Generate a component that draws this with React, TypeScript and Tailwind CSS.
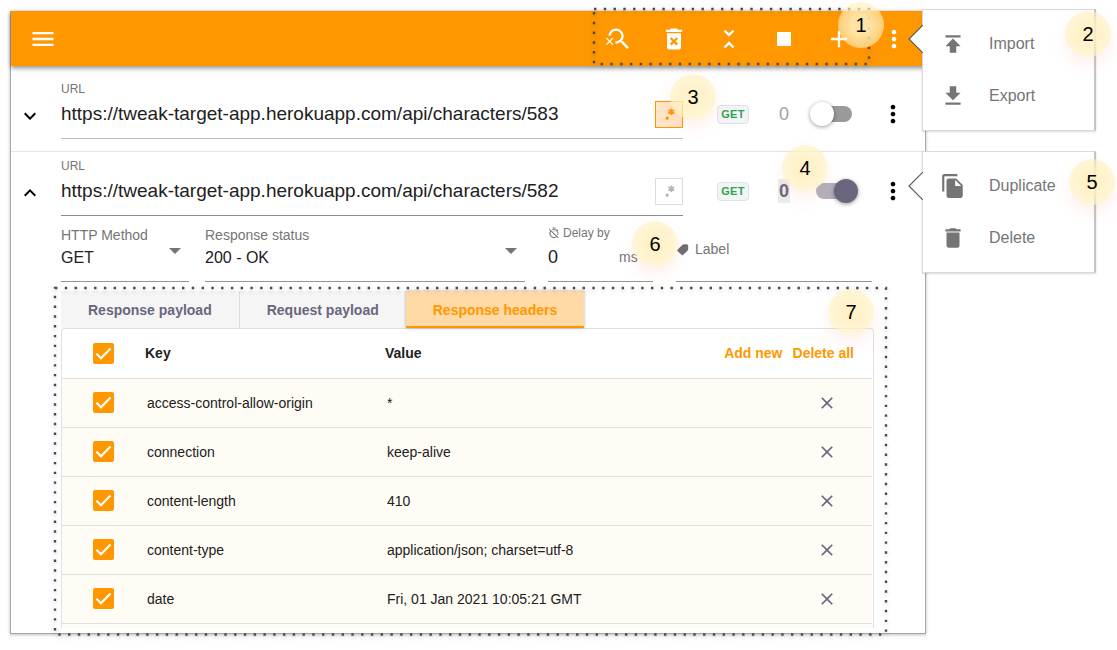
import { useState } from 'react';
import type { ReactNode } from 'react';
import {
  MdAdd,
  MdClose,
  MdExpandLess,
  MdExpandMore,
  MdMenu,
  MdMoreVert,
  MdOutlineTimerOff,
  MdSearchOff,
  MdStop,
  MdUnfoldLess,
} from 'react-icons/md';

type IconProps = { className?: string };

function solidIcon(d: string) {
  return function SolidIcon({ className }: IconProps) {
    return (
      <svg viewBox="0 0 24 24" fill="currentColor" className={className} aria-hidden="true">
        <path fillRule="evenodd" d={d} />
      </svg>
    );
  };
}

const ImportIcon = solidIcon('M5 4v2h14V4H5zm0 10h4v6h6v-6h4l-7-7-7 7z');
const ExportIcon = solidIcon('M19 9h-4V3H9v6H5l7 7 7-7zM5 18v2h14v-2H5z');
const DuplicateIcon = solidIcon(
  'M16 1H4c-1.1 0-2 .9-2 2v14h2V3h12V1zm-1 4l6 6v10c0 1.1-.9 2-2 2H7.99C6.89 23 6 22.1 6 21l.01-14c0-1.1.89-2 1.99-2h7zm-1 7h5.5L14 6.5V12z',
);
const DeleteIcon = solidIcon('M6 19c0 1.1.9 2 2 2h8c1.1 0 2-.9 2-2V7H6v12zM19 4h-3.5l-1-1h-5l-1 1H5v2h14V4z');
const DeleteAllIcon = solidIcon(
  'M6 19c0 1.1.9 2 2 2h8c1.1 0 2-.9 2-2V7H6v12zm2.46-7.12l1.41-1.41L12 12.59l2.12-2.12 1.41 1.41L13.41 14l2.12 2.12-1.41 1.41L12 15.41l-2.12 2.12-1.41-1.41L10.59 14l-2.13-2.12zM15.5 4l-1-1h-5l-1 1H5v2h14V4z',
);

const headers = [
  { key: 'access-control-allow-origin', value: '*' },
  { key: 'connection', value: 'keep-alive' },
  { key: 'content-length', value: '410' },
  { key: 'content-type', value: 'application/json; charset=utf-8' },
  { key: 'date', value: 'Fri, 01 Jan 2021 10:05:21 GMT' },
];

const tools = [
  { label: 'Clear search', icon: MdSearchOff },
  { label: 'Delete all rules', icon: DeleteAllIcon },
  { label: 'Collapse all', icon: MdUnfoldLess },
  { label: 'Stop', icon: MdStop },
  { label: 'Add rule', icon: MdAdd },
];

const badges = [
  { n: 1, place: 'top-[2px] right-[233px]' },
  { n: 2, place: 'top-[11px] right-[6px]' },
  { n: 3, place: 'top-[74px] right-[401px]' },
  { n: 4, place: 'top-[145px] right-[289px]' },
  { n: 5, place: 'top-[159px] right-[2px]' },
  { n: 6, place: 'top-[221px] right-[439px]' },
  { n: 7, place: 'top-[289px] right-[243px]' },
];

function DottedOutline({ className }: { className: string }) {
  return (
    <svg
      className={`pointer-events-none absolute overflow-visible drop-shadow-[0_2px_2px_rgba(0,0,0,0.25)] ${className}`}
      aria-hidden="true"
    >
      <rect width="100%" height="100%" fill="none" stroke="#4a4a4a" strokeWidth="2.4" strokeDasharray="2.4 7.37" />
    </svg>
  );
}

function Check({ label }: { label: string }) {
  return (
    <span className="relative mx-auto block size-[21px]">
      <input
        type="checkbox"
        defaultChecked
        aria-label={label}
        className="peer block size-[21px] appearance-none rounded-xs border-2 border-[#ff9800] checked:bg-[#ff9800]"
      />
      <svg viewBox="0 0 21 21" className="pointer-events-none absolute inset-0 hidden peer-checked:block" aria-hidden="true">
        <path d="M3.5 10.8 8 15.2 17.5 5.6" fill="none" stroke="#fff" strokeWidth="2.2" />
      </svg>
    </span>
  );
}

type UrlRowProps = { id: string; url: string; open: boolean; regex: boolean; enabled: boolean; className: string };

function UrlRow({ id, url, open, regex, enabled, className }: UrlRowProps) {
  const [on, setOn] = useState(enabled);
  const Chevron = open ? MdExpandLess : MdExpandMore;
  return (
    <div className={`flex items-center pr-[18px] ${className}`}>
      <button type="button" aria-label="Toggle details" className="mr-[19px] ml-[7px] pt-3 text-black">
        <Chevron className="size-6" />
      </button>
      <div className={`min-w-0 flex-1 border-b pb-[7px] ${open ? 'border-[#8c8c8c]' : 'border-[#bdbdbd]'}`}>
        <label htmlFor={id} className="block text-xs leading-4 text-[#757575]">
          URL
        </label>
        <div className="flex h-[34px] items-center">
          <input id={id} defaultValue={url} className="min-w-0 flex-1 bg-transparent text-[19px] text-[#212121] outline-none" />
          <button
            type="button"
            aria-label="Use regular expression"
            className={`flex h-[27px] w-7 items-center justify-center border ${
              regex ? 'border-[#ff9800] bg-[#ffe5c8] text-[#ff9800]' : 'border-[#dcdcdc] bg-white text-[#b5b5b5]'
            }`}
          >
            <svg viewBox="0 0 16 16" className="size-4" aria-hidden="true">
              <circle cx="6.2" cy="12.2" r="1.6" fill="currentColor" />
              <path d="M10.3 2.4v6.6M7.4 4l5.8 3.4M13.2 4l-5.8 3.4" stroke="currentColor" strokeWidth="1.7" />
            </svg>
          </button>
        </div>
      </div>
      <div className="flex items-center pt-2">
        <span className="ml-[34px] flex h-[19px] w-8 items-center justify-center rounded-sm border border-[#dfe1e6] bg-[#f3f4f6] text-[11px] font-bold tracking-wide text-[#2ea44f]">
          GET
        </span>
        <span
          className={`ml-[29px] w-3 text-center text-lg leading-6 ${
            on ? 'bg-[#ececec] font-bold text-[#6b667d]' : 'text-[#a0a0a0]'
          }`}
        >
          0
        </span>
        <input
          type="checkbox"
          role="switch"
          aria-label="Enabled"
          checked={on}
          onChange={() => setOn(!on)}
          className="relative mr-[27px] ml-[26px] h-4 w-9 appearance-none rounded-full bg-[#9a9a9a] before:absolute before:-top-1 before:-left-1.5 before:size-6 before:rounded-full before:bg-white before:shadow-[0_1px_4px_rgba(0,0,0,0.4)] checked:bg-[#b3b0bd] checked:before:left-[18px] checked:before:bg-[#6b667d]"
        />
        <button type="button" aria-label="Rule menu" className="text-black">
          <MdMoreVert className="size-7" />
        </button>
      </div>
    </div>
  );
}

function SelectField({ id, label, value, className }: { id: string; label: string; value: string; className: string }) {
  return (
    <div className={`relative border-b border-[#949494] pb-2.5 ${className}`}>
      <label htmlFor={id} className="block text-sm leading-[18px] text-[#757575]">
        {label}
      </label>
      <select id={id} defaultValue={value} className="block h-[27px] w-full appearance-none bg-transparent text-base text-[#212121] outline-none">
        <option>{value}</option>
      </select>
      <svg viewBox="0 0 12 6" className="pointer-events-none absolute top-[22px] right-2 h-1.5 w-3" aria-hidden="true">
        <path d="M0 0h12L6 6z" fill="#757575" />
      </svg>
    </div>
  );
}

type MenuProps = { items: { label: string; icon: ReactNode }[]; className: string; arrow: string };

function Menu({ items, className, arrow }: MenuProps) {
  return (
    <div
      role="menu"
      className={`absolute right-[21px] flex w-[174px] flex-col border border-r-2 border-[#dadada] border-r-[#c4c4c4] bg-white py-2 shadow-[0_1px_2px_rgba(0,0,0,0.15)] ${className}`}
    >
      <svg viewBox="0 0 15 28" className={`absolute -left-[15px] h-7 w-[15px] ${arrow}`} aria-hidden="true">
        <path d="M15 0 1 14l14 14" fill="#fff" stroke="#555" strokeWidth="1.1" />
      </svg>
      {items.map((item) => (
        <button key={item.label} type="button" role="menuitem" className="flex h-[52px] items-center pl-[18px] text-base text-[#757575]">
          <span className="flex w-6 justify-center">{item.icon}</span>
          <span className="ml-6">{item.label}</span>
        </button>
      ))}
    </div>
  );
}

function HeadersPanel() {
  const tab = 'h-[37px] px-[27px] text-sm font-bold';
  return (
    <section className="relative mt-[9px] mr-[51px] ml-[50px]">
      <div role="tablist" className="flex">
        <button type="button" role="tab" aria-selected="false" className={`${tab} border-r border-[#dcdcdc] bg-[#f5f5f5] text-[#6b667d]`}>
          Response payload
        </button>
        <button type="button" role="tab" aria-selected="false" className={`${tab} bg-[#f5f5f5] text-[#6b667d]`}>
          Request payload
        </button>
        <button
          type="button"
          role="tab"
          aria-selected="true"
          className={`${tab} bg-[#ffd9a6] text-[#ff9800] shadow-[inset_0_-2px_0_#ff9800,0_0_3px_rgba(0,0,0,0.3)]`}
        >
          Response headers
        </button>
      </div>
      <div className="rounded-t border border-b-0 border-[#e0e0e0] pr-px">
        <table className="w-full table-fixed border-collapse text-left text-sm text-[#212121]">
          <colgroup>
            <col className="w-[83px]" />
            <col className="w-[240px]" />
            <col />
            <col className="w-[150px]" />
          </colgroup>
          <thead>
            <tr className="h-[49px] border-b border-[#e0e0e0]">
              <th>
                <Check label="Select all headers" />
              </th>
              <th className="font-bold">Key</th>
              <th className="font-bold">Value</th>
              <th className="pr-[18px] text-right whitespace-nowrap text-[#ff9800]">
                <button type="button">Add new</button>
                <button type="button" className="ml-2.5">
                  Delete all
                </button>
              </th>
            </tr>
          </thead>
          <tbody className="bg-[#fffcf5]">
            {headers.map((h) => (
              <tr key={h.key} className="h-[49px] border-b border-[#e0e0e0]">
                <td>
                  <Check label={h.key} />
                </td>
                <td className="pl-0.5">{h.key}</td>
                <td className="pl-0.5">{h.value}</td>
                <td className="pr-[35px] text-right">
                  <button type="button" aria-label={`Delete ${h.key}`} className="ml-auto block text-[#6b667d]">
                    <MdClose className="size-5" />
                  </button>
                </td>
              </tr>
            ))}
          </tbody>
        </table>
        <div className="h-1 bg-[#fffcf5]" />
      </div>
      <DottedOutline className="-top-[3px] -left-[6px] h-[calc(100%+10px)] w-[calc(100%+18px)]" />
    </section>
  );
}

export default function App() {
  return (
    <div className="relative min-h-screen bg-white pt-[11px] pr-[191px] pb-4 pl-[10px] font-['Liberation_Sans',Arial,sans-serif]">
      <main className="border border-t-0 border-[#a8a8a8] pb-[5px] shadow-[0_1px_3px_rgba(0,0,0,0.25)]">
        <header className="relative flex h-[55px] items-center bg-[#ff9800] pr-[17px] pl-[18px] text-white shadow-[0_2px_5px_rgba(0,0,0,0.45)]">
          <button type="button" aria-label="Open navigation">
            <MdMenu className="size-7" />
          </button>
          <div className="ml-auto flex gap-[27px]">
            {tools.map(({ label, icon: Icon }) => (
              <button key={label} type="button" aria-label={label}>
                <Icon className="size-7" />
              </button>
            ))}
            <button type="button" aria-label="More options">
              <MdMoreVert className="size-7" />
            </button>
          </div>
          <DottedOutline className="-top-0.5 right-[56px] h-[55px] w-[275px]" />
        </header>

        <UrlRow
          id="url-583"
          url="https://tweak-target-app.herokuapp.com/api/characters/583"
          open={false}
          regex
          enabled={false}
          className="border-b border-[#e4e4e4] pt-[15px] pb-3"
        />
        <UrlRow
          id="url-582"
          url="https://tweak-target-app.herokuapp.com/api/characters/582"
          open
          regex={false}
          enabled
          className="pt-1.5"
        />

        <div className="flex pt-2.5 pr-[53px] pl-[50px]">
          <SelectField id="method" label="HTTP Method" value="GET" className="w-32" />
          <SelectField id="status" label="Response status" value="200 - OK" className="ml-4 min-w-0 flex-1" />
          <div className="ml-[23px] w-[105px] border-b border-[#949494] pb-[11px]">
            <label htmlFor="delay" className="flex h-[18px] items-start gap-[3px] text-xs leading-[14px] text-[#757575]">
              <MdOutlineTimerOff className="mt-px size-3" />
              Delay by
            </label>
            <div className="flex h-[26px] items-center">
              <input id="delay" defaultValue="0" className="w-[71px] bg-transparent text-lg text-[#212121] outline-none" />
              <span className="text-sm text-[#757575]">ms</span>
            </div>
          </div>
          <div className="ml-[23px] flex w-[196px] items-center border-b border-[#949494] pb-2.5">
            <svg viewBox="0 0 14 14" className="size-3.5" aria-hidden="true">
              <path d="M1.2 8 6.2 3Q7 2.2 8 2.2H10.6Q12.2 2.2 12.2 3.8V7Q12.2 8 11.4 8.7L7 13Q6.4 13.4 5.8 12.9L1.4 9Q.9 8.5 1.2 8Z" fill="#6e6e6e" />
            </svg>
            <input aria-label="Label" placeholder="Label" className="ml-[5px] min-w-0 flex-1 bg-transparent text-sm outline-none placeholder:text-[#757575]" />
          </div>
        </div>

        <HeadersPanel />
      </main>

      <Menu
        className="top-[9px]"
        arrow="top-[15px]"
        items={[
          { label: 'Import', icon: <ImportIcon className="size-[26px] shrink-0" /> },
          { label: 'Export', icon: <ExportIcon className="size-[26px] shrink-0" /> },
        ]}
      />
      <Menu
        className="top-[151px]"
        arrow="top-5"
        items={[
          { label: 'Duplicate', icon: <DuplicateIcon className="size-[26px] shrink-0" /> },
          { label: 'Delete', icon: <DeleteIcon className="size-[26px] shrink-0" /> },
        ]}
      />

      {badges.map((b) => (
        <span
          key={b.n}
          className={`pointer-events-none absolute flex size-[46px] items-center justify-center rounded-full bg-[radial-gradient(circle,rgba(255,240,192,0.85)_30%,rgba(255,240,192,0.6)_70%)] text-xl text-black shadow-[0_8px_16px_rgba(255,110,80,0.1)] ${b.place}`}
        >
          {b.n}
        </span>
      ))}
    </div>
  );
}
